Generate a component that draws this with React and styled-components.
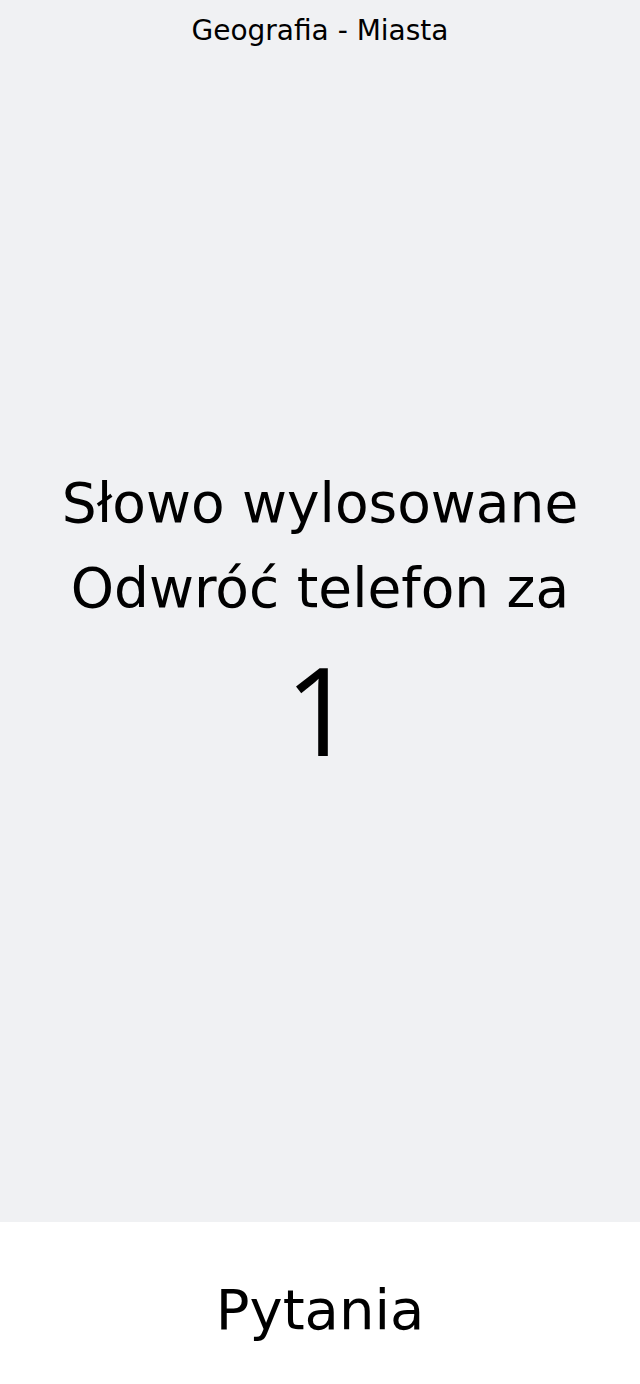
import React from "react";
import styled, { createGlobalStyle } from "styled-components";

const Global = createGlobalStyle`
  html, body { margin: 0; padding: 0; }
  body { font-family: "DejaVu Sans", "Open Sans", sans-serif; color: #000; background: #fff; }
`;

const Page = styled.div`
  display: flex;
  flex-direction: column;
  min-height: 1384px;
`;

const Stage = styled.main`
  flex: 1;
  background: #f0f1f3;
  display: flex;
  flex-direction: column;
  align-items: center;
`;

const Category = styled.h2`
  margin: 0;
  padding-top: 14px;
  font-size: 28px;
  font-weight: 400;
  line-height: 34px;
  text-align: center;
`;

const Center = styled.div`
  flex: 1;
  display: flex;
  flex-direction: column;
  align-items: center;
  justify-content: center;
  padding-bottom: 21px;
  text-align: center;
`;

const Message = styled.p`
  margin: 0;
  font-size: 55px;
  line-height: 85px;
  font-weight: 400;
  white-space: nowrap;
`;

const Countdown = styled.div`
  font-family: "Open Sans", sans-serif;
  font-size: 122px;
  line-height: 157px;
  font-weight: 400;
`;

const Footer = styled.footer`
  height: 162px;
  box-sizing: border-box;
  padding-top: 12px;
  background: #fff;
  display: flex;
  align-items: center;
  justify-content: center;
`;

const FooterTitle = styled.h1`
  margin: 0;
  font-size: 56px;
  font-weight: 400;
`;

export default function App() {
  return (
    <Page>
      <Global />
      <Stage>
        <Category>Geografia - Miasta</Category>
        <Center>
          <Message>Słowo wylosowane</Message>
          <Message>Odwróć telefon za</Message>
          <Countdown>1</Countdown>
        </Center>
      </Stage>
      <Footer>
        <FooterTitle>Pytania</FooterTitle>
      </Footer>
    </Page>
  );
}
